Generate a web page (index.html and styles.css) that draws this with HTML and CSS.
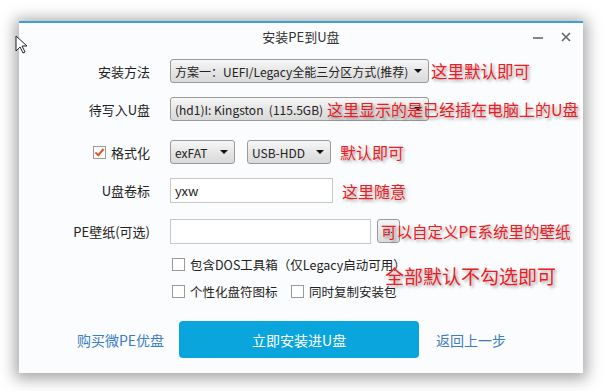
FILE: index.html
```html
<!DOCTYPE html>
<html lang="zh-CN">
<head>
  <meta charset="UTF-8">
  <title>安装PE到U盘</title>
  <link rel="stylesheet" href="styles.css">
</head>
<body>
  <div class="window">
    <!-- Title bar -->
    <div class="titlebar">
      <span class="title">安装PE到U盘</span>
      <span class="win-btns">
        <svg width="12" height="12" viewBox="0 0 12 12"><path d="M1 7h10" stroke="#666" stroke-width="1.6"/></svg>
        <svg width="12" height="12" viewBox="0 0 12 12"><path d="M2 2l8 8M10 2l-8 8" stroke="#666" stroke-width="1.6"/></svg>
      </span>
    </div>

    <div class="form">
      <div class="row r1">
        <label class="lbl">安装方法</label>
        <div class="combo w-method">方案一：UEFI/Legacy全能三分区方式(推荐)<i class="arrow"></i></div>
        <span class="note first">这里默认即可</span>
      </div>

      <div class="row r2">
        <label class="lbl">待写入U盘</label>
        <div class="combo w-method">(hd1)I: Kingston&nbsp; (115.5GB)<i class="arrow"></i></div>
        <span class="note overlap">这里显示的是已经插在电脑上的U盘</span>
      </div>

      <div class="row r3">
        <label class="lbl"><span class="check on"></span>格式化</label>
        <div class="combo w-fs">exFAT<i class="arrow"></i></div>
        <div class="combo w-mode">USB-HDD<i class="arrow"></i></div>
        <span class="note">默认即可</span>
      </div>

      <div class="row r4">
        <label class="lbl">U盘卷标</label>
        <div class="field w-label">yxw</div>
        <span class="note">这里随意</span>
      </div>

      <div class="row r5">
        <label class="lbl">PE壁纸(可选)</label>
        <div class="field w-wall"></div>
        <div class="browse">...</div>
        <span class="note over-btn">可以自定义PE系统里的壁纸</span>
      </div>

      <div class="opts">
        <div class="opt-line">
          <span class="opt"><span class="check"></span>包含DOS工具箱（仅Legacy启动可用）</span>
        </div>
        <div class="opt-line">
          <span class="opt"><span class="check"></span>个性化盘符图标</span>
          <span class="opt"><span class="check"></span>同时复制安装包</span>
        </div>
        <span class="note big">全部默认不勾选即可</span>
      </div>

      <div class="actions">
        <a href="#" class="link">购买微PE优盘</a>
        <button class="install">立即安装进U盘</button>
        <a href="#" class="link">返回上一步</a>
      </div>
    </div>
  </div>

  <!-- mouse pointer -->
  <svg class="cursor" width="14" height="20" viewBox="0 0 14 20">
    <path d="M1 1v15l4-4 3 6 2-1-3-6h5z" fill="#fff" stroke="#222" stroke-width="1"/>
  </svg>
</body>
</html>
```

FILE: styles.css
```css
body {
  margin: 0;
  padding: 21px 0 0 19px;
  background-color: #fff;
  font-family: "Microsoft YaHei", "Noto Sans CJK SC", "Noto Sans", sans-serif;
  color: #222;
  font-size: 13px;
  position: relative;
  height: 370px;
  overflow: hidden;
}
.window {
  width: 564px;
  height: 350px;
  background-color: #fbfcfd;
  border-top: 2px solid #3d9fd6;
  box-shadow: 0 2px 14px 4px rgba(0, 0, 0, 0.35);
  position: relative;
}
.titlebar {
  height: 26px;
  display: flex;
  align-items: center;
  justify-content: center;
  position: relative;
}
.title {
  font-size: 13px;
  color: #333;
}
.win-btns {
  position: absolute;
  right: 11px;
  top: 8px;
  display: flex;
  gap: 16px;
}
.form {
  padding-top: 10px;
  position: relative;
}
.row {
  display: flex;
  align-items: center;
  height: 24px;
  position: relative;
}
.r1 { margin-bottom: 14px; }
.r2 { margin-bottom: 19px; }
.r3 { margin-bottom: 14px; }
.r4 { height: 25px; margin-bottom: 16px; }
.r5 { margin-bottom: 11px; }
.lbl {
  width: 131px;
  margin-right: 20px;
  display: flex;
  justify-content: flex-end;
  align-items: center;
  font-size: 13px;
  white-space: nowrap;
}
.combo {
  height: 22px;
  border: 1px solid #9a9a9a;
  border-radius: 3px;
  background: linear-gradient(#f7f7f7, #e6e6e6 50%, #dadada);
  display: flex;
  align-items: center;
  padding-left: 4px;
  position: relative;
  font-size: 12px;
  white-space: nowrap;
  overflow: hidden;
}
.arrow {
  position: absolute;
  right: 6px;
  top: 9px;
  border-left: 4px solid transparent;
  border-right: 4px solid transparent;
  border-top: 4px solid #111;
}
.w-method { width: 253px; }
.w-fs { width: 59px; margin-right: 12px; }
.w-mode { width: 78px; }
.field {
  height: 23px;
  border: 1px solid #c8c8c8;
  background-color: #fff;
  display: flex;
  align-items: center;
  padding-left: 4px;
  font-size: 13px;
}
.w-label { width: 157px; }
.w-wall { width: 195px; }
.browse {
  width: 21px;
  height: 22px;
  margin-left: 6px;
  border: 1px solid #9a9a9a;
  border-radius: 3px;
  background: linear-gradient(#f4f4f4, #dcdcdc);
  font-size: 10px;
  line-height: 18px;
  text-align: center;
}
.check {
  width: 11px;
  height: 11px;
  border: 1px solid #9a9a9a;
  background-color: #fff;
  margin-right: 5px;
  display: inline-block;
  position: relative;
  flex: none;
}
.check.on::after {
  content: "";
  position: absolute;
  left: 3px;
  top: 0px;
  width: 3px;
  height: 7px;
  border-right: 2px solid #e0562a;
  border-bottom: 2px solid #e0562a;
  transform: rotate(40deg);
}
.note {
  color: #ee1a24;
  font-size: 16px;
  text-shadow: 2px 2px 3px rgba(0, 0, 0, 0.35);
  margin-left: 9px;
  white-space: nowrap;
}
.note.first {
  margin-left: 2px;
  font-size: 16.5px;
}
.note.overlap {
  position: absolute;
  left: 299px;
  top: 0;
}
.note.over-btn {
  position: absolute;
  left: 353px;
  top: 1px;
  font-size: 15.5px;
}
.note.big {
  position: absolute;
  left: 357px;
  top: 8px;
  font-size: 19px;
}
.opts {
  padding-left: 153px;
  position: relative;
  font-size: 12.5px;
}
.opt-line {
  display: flex;
  align-items: center;
  height: 20px;
  margin-bottom: 7px;
}
.opt {
  display: flex;
  align-items: center;
  width: 119px;
  white-space: nowrap;
}
.actions {
  display: flex;
  align-items: center;
  margin-top: 20px;
  padding-left: 58px;
}
.link {
  color: #3b7dc2;
  text-decoration: none;
  font-size: 14px;
}
.install {
  width: 240px;
  height: 37px;
  margin: 0 17px 0 15px;
  border: none;
  border-radius: 4px;
  background-color: #0ba5dd;
  color: #fff;
  font-family: inherit;
  font-size: 14px;
}
.cursor {
  position: absolute;
  left: 15px;
  top: 35px;
}
```
